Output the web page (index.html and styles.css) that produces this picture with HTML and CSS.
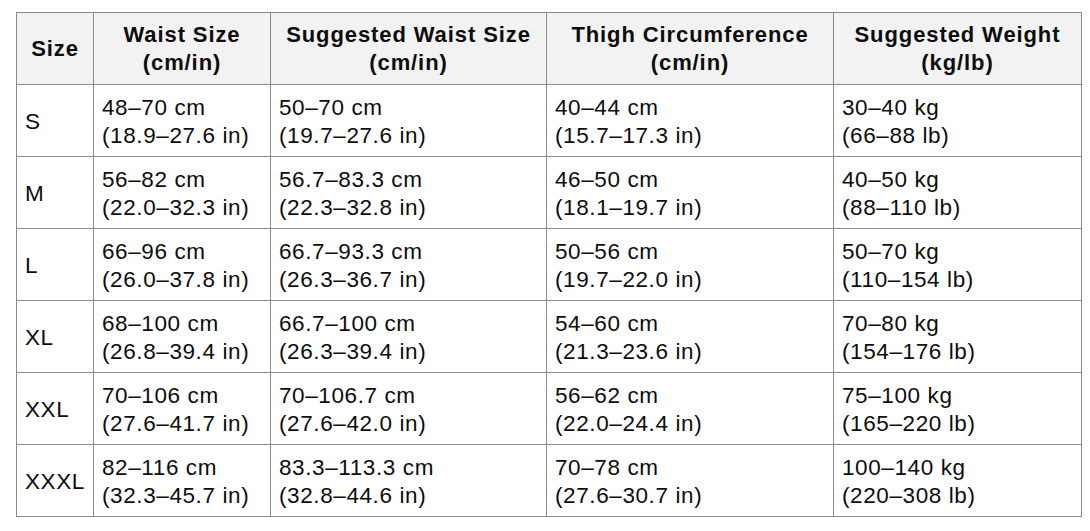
FILE: index.html
```html
<!DOCTYPE html>
<html lang="en">
<head>
<meta charset="utf-8">
<title>Size Chart</title>
<link rel="stylesheet" href="styles.css">
</head>
<body>
<div class="page">
<table class="chart">
  <colgroup>
    <col class="c-size">
    <col class="c-waist">
    <col class="c-swaist">
    <col class="c-thigh">
    <col class="c-weight">
  </colgroup>
  <thead>
    <tr>
      <th>Size</th>
      <th>Waist Size<br>(cm/in)</th>
      <th>Suggested Waist Size<br>(cm/in)</th>
      <th>Thigh Circumference<br>(cm/in)</th>
      <th>Suggested Weight<br>(kg/lb)</th>
    </tr>
  </thead>
  <tbody>
    <tr>
      <td class="sz">S</td>
      <td>48–70 cm<br>(18.9–27.6 in)</td>
      <td>50–70 cm<br>(19.7–27.6 in)</td>
      <td>40–44 cm<br>(15.7–17.3 in)</td>
      <td>30–40 kg<br>(66–88 lb)</td>
    </tr>
    <tr>
      <td class="sz">M</td>
      <td>56–82 cm<br>(22.0–32.3 in)</td>
      <td>56.7–83.3 cm<br>(22.3–32.8 in)</td>
      <td>46–50 cm<br>(18.1–19.7 in)</td>
      <td>40–50 kg<br>(88–110 lb)</td>
    </tr>
    <tr>
      <td class="sz">L</td>
      <td>66–96 cm<br>(26.0–37.8 in)</td>
      <td>66.7–93.3 cm<br>(26.3–36.7 in)</td>
      <td>50–56 cm<br>(19.7–22.0 in)</td>
      <td>50–70 kg<br>(110–154 lb)</td>
    </tr>
    <tr>
      <td class="sz">XL</td>
      <td>68–100 cm<br>(26.8–39.4 in)</td>
      <td>66.7–100 cm<br>(26.3–39.4 in)</td>
      <td>54–60 cm<br>(21.3–23.6 in)</td>
      <td>70–80 kg<br>(154–176 lb)</td>
    </tr>
    <tr>
      <td class="sz">XXL</td>
      <td>70–106 cm<br>(27.6–41.7 in)</td>
      <td>70–106.7 cm<br>(27.6–42.0 in)</td>
      <td>56–62 cm<br>(22.0–24.4 in)</td>
      <td>75–100 kg<br>(165–220 lb)</td>
    </tr>
    <tr>
      <td class="sz">XXXL</td>
      <td>82–116 cm<br>(32.3–45.7 in)</td>
      <td>83.3–113.3 cm<br>(32.8–44.6 in)</td>
      <td>70–78 cm<br>(27.6–30.7 in)</td>
      <td>100–140 kg<br>(220–308 lb)</td>
    </tr>
  </tbody>
</table>
</div>
</body>
</html>
```

FILE: styles.css
```css
html, body {
  margin: 0;
  padding: 0;
  background: #ffffff;
}

.page {
  padding: 12px 0 0 16px;
}

.chart {
  border-collapse: collapse;
  table-layout: fixed;
  width: 1065px;
  font-family: "Liberation Sans", Arial, sans-serif;
  color: #0d0d0d;
}

.c-size { width: 77px; }
.c-waist { width: 177px; }
.c-swaist { width: 276px; }
.c-thigh { width: 287px; }
.c-weight { width: 248px; }

.chart tr {
  height: 72px;
}

.chart th,
.chart td {
  border: 1px solid #8a8a8a;
  vertical-align: middle;
  white-space: nowrap;
  overflow: hidden;
}

.chart th {
  background: #f2f2f2;
  font-weight: bold;
  font-size: 22px;
  line-height: 28px;
  letter-spacing: 0.9px;
  text-align: center;
  padding: 0 2px;
}

.chart td {
  font-size: 22.5px;
  line-height: 28px;
  letter-spacing: 0.6px;
  text-align: left;
  padding: 2px 4px 0 8px;
}
```
